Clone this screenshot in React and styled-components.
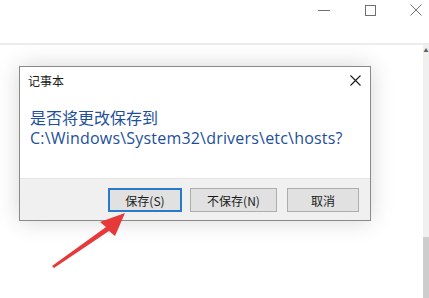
import React from 'react'
import styled, { createGlobalStyle } from 'styled-components'

const GlobalStyle = createGlobalStyle`
  html, body {
    margin: 0;
    padding: 0;
    background: #ffffff;
    overflow: hidden;
  }
  body {
    font-family: "Open Sans", "Noto Sans CJK SC", sans-serif;
  }
`

const Page = styled.div`
  position: relative;
  width: 429px;
  height: 298px;
  display: flex;
  flex-direction: column;
  background: #ffffff;
`

const TitleBar = styled.div`
  height: 43px;
  display: flex;
  justify-content: flex-end;
  align-items: flex-start;
  gap: 34px;
  padding-right: 7px;
  border-bottom: 2px solid #ececec;
`

const WinButton = styled.div`
  width: 12px;
  height: 20px;
  display: flex;
  align-items: center;
  justify-content: center;
  color: #707070;
`

const Body = styled.div`
  flex: 1;
  display: flex;
  min-height: 0;
`

const Editor = styled.div`
  flex: 1;
  padding: 21px 0 0 19px;
`

const ScrollBar = styled.div`
  width: 6px;
  display: flex;
  flex-direction: column;
  background: #f0f0f0;
`

const ScrollArrow = styled.div`
  height: 8px;
  display: flex;
  justify-content: center;
  align-items: flex-end;
  color: #606060;
  font-size: 5px;
  line-height: 1;
`

const ScrollTrack = styled.div`
  flex: 1;
`

const ScrollThumb = styled.div`
  height: 61px;
  background: #cdcdcd;
`

const Dialog = styled.div`
  width: 350px;
  border: 1px solid #8a8a8a;
  background: #ffffff;
  box-shadow: 0 0 22px rgba(0, 0, 0, 0.16);
  display: flex;
  flex-direction: column;
`

const DialogHeader = styled.div`
  height: 27px;
  display: flex;
  align-items: center;
  justify-content: space-between;
  padding: 0 9px 0 8px;
  font-family: "Noto Sans CJK SC", sans-serif;
  font-size: 12px;
  color: #1a1a1a;
`

const CloseX = styled.div`
  width: 12px;
  height: 12px;
  display: flex;
  align-items: center;
  justify-content: center;
`

const Message = styled.div`
  height: 84px;
  padding: 14px 0 0 10px;
  box-sizing: border-box;
  font-family: "Open Sans", "Noto Sans CJK SC", sans-serif;
  font-size: 16px;
  color: #1e4f9c;
`

const MessageLine = styled.div`
  height: 20px;
  line-height: 20px;
  white-space: nowrap;
  letter-spacing: ${p => p.$spacing || '0'};
`

const Footer = styled.div`
  height: 42px;
  background: #f0f0f0;
  border-top: 1px solid #e6e6e6;
  box-sizing: border-box;
  display: flex;
  justify-content: flex-end;
  align-items: flex-start;
  padding: 9px 11px 0 0;
`

const Button = styled.div`
  width: ${p => p.$width}px;
  margin-left: ${p => p.$gap}px;
  height: 24px;
  box-sizing: border-box;
  display: flex;
  align-items: center;
  justify-content: center;
  background: #e1e1e1;
  border: ${p => (p.$focused ? '2px solid #2b7ac9' : '1px solid #adadad')};
  font-family: "Noto Sans CJK SC", sans-serif;
  font-size: 12px;
  color: #1a1a1a;
`

const Arrow = styled.svg`
  position: absolute;
  left: 0;
  top: 0;
  pointer-events: none;
`

const App = () => {
  return (
    <Page>
      <GlobalStyle />
      <TitleBar>
        <WinButton>
          <svg width="12" height="12" viewBox="0 0 12 12">
            <path d="M0 6.5H12" stroke="currentColor" strokeWidth="1" />
          </svg>
        </WinButton>
        <WinButton>
          <svg width="11" height="11" viewBox="0 0 11 11">
            <rect x="0.5" y="0.5" width="10" height="10" fill="none" stroke="currentColor" strokeWidth="1" />
          </svg>
        </WinButton>
        <WinButton>
          <svg width="12" height="12" viewBox="0 0 12 12">
            <path d="M0.5 0.5L11.5 11.5M11.5 0.5L0.5 11.5" stroke="currentColor" strokeWidth="1" />
          </svg>
        </WinButton>
      </TitleBar>
      <Body>
        <Editor>
          <Dialog>
            <DialogHeader>
              <span>记事本</span>
              <CloseX>
                <svg width="11" height="11" viewBox="0 0 11 11">
                  <path d="M0.5 0.5L10.5 10.5M10.5 0.5L0.5 10.5" stroke="#1a1a1a" strokeWidth="1.1" />
                </svg>
              </CloseX>
            </DialogHeader>
            <Message>
              <MessageLine>是否将更改保存到</MessageLine>
              <MessageLine $spacing="0.2px">C:\Windows\System32\drivers\etc\hosts?</MessageLine>
            </Message>
            <Footer>
              <Button $focused $width={74} $gap={0}>保存(S)</Button>
              <Button $width={87} $gap={8}>不保存(N)</Button>
              <Button $width={72} $gap={10}>取消</Button>
            </Footer>
          </Dialog>
        </Editor>
        <ScrollBar>
          <ScrollArrow>▲</ScrollArrow>
          <ScrollTrack />
          <ScrollThumb />
        </ScrollBar>
      </Body>
      <Arrow width="429" height="298" viewBox="0 0 429 298">
        <path d="M125 213 L100 222 L106 227 L52 266 L54 268 L109 231 L115 236 Z" fill="#e63a3a" />
      </Arrow>
    </Page>
  )
}

export default App
